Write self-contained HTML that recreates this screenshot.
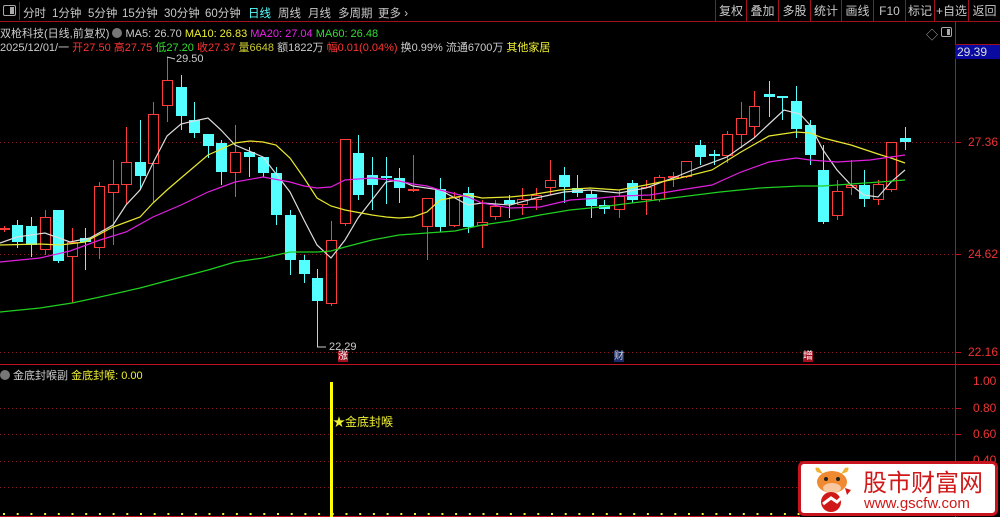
<!DOCTYPE html>
<html><head><meta charset="utf-8"><style>
*{margin:0;padding:0;box-sizing:border-box}
body{width:1000px;height:517px;background:#000;overflow:hidden;position:relative;font-family:"Liberation Sans","Noto Sans CJK SC",sans-serif;font-size:12px;color:#ccc}
.bar{position:absolute;left:0;top:0;width:1000px;height:22px;border-bottom:1px solid #a01020;background:#000}
.bar span{position:absolute;top:5px;font-size:11.5px;color:#c8c8c8}
.rb{position:absolute;top:0;height:22px;border-left:1px solid #a01020;color:#c8c8c8;font-size:12px;text-align:center;line-height:22px}
.t{position:absolute;white-space:nowrap;font-size:11px}
</style></head><body>
<div class="bar">
<div style="position:absolute;left:3px;top:5px;width:13px;height:11px;border:1px solid #aaa;border-radius:2px"><div style="position:absolute;right:1px;top:1px;width:4px;height:7px;background:#aaa"></div></div>
<div style="position:absolute;left:19px;top:2px;width:1px;height:18px;background:#a01020"></div>
<span style="left:23px">分时</span><span style="left:52px">1分钟</span><span style="left:88px">5分钟</span><span style="left:122px">15分钟</span><span style="left:164px">30分钟</span><span style="left:205px">60分钟</span><span style="left:248px;color:#5ff">日线</span><span style="left:278px">周线</span><span style="left:308px">月线</span><span style="left:338px">多周期</span><span style="left:378px">更多 ›</span>
<div class="rb" style="left:715px;width:31px">复权</div><div class="rb" style="left:746px;width:32px">叠加</div><div class="rb" style="left:778px;width:32px">多股</div><div class="rb" style="left:810px;width:31px">统计</div><div class="rb" style="left:841px;width:32px">画线</div><div class="rb" style="left:873px;width:32px">F10</div><div class="rb" style="left:905px;width:29px">标记</div><div class="rb" style="left:934px;width:34px">+自选</div><div class="rb" style="left:968px;width:32px">返回</div>
</div>
<div class="t" style="left:0;top:25px;color:#ccc">双枪科技(日线,前复权) <span style="display:inline-block;width:10px;height:10px;border-radius:5px;background:#777;vertical-align:-1px"></span> MA5: 26.70 <span style="color:#ee3">MA10: 26.83</span> <span style="color:#e2e">MA20: 27.04</span> <span style="color:#3d3">MA60: 26.48</span></div>
<div class="t" style="left:0;top:39px;color:#ccc">2025/12/01/一 <span style="color:#f33">开27.50 高27.75</span> <span style="color:#3d3">低27.20</span> <span style="color:#f33">收27.37</span> <span style="color:#cc3">量6648</span> 额1822万 <span style="color:#f33">幅0.01(0.04%)</span> 换0.99% 流通6700万 <span style="color:#ee3">其他家居</span></div>
<div class="t" style="left:926px;top:26px;color:#aaa;font-size:12px">◇</div>
<div style="position:absolute;left:941px;top:27px;width:11px;height:10px;border:1px solid #aaa;border-radius:2px"><div style="position:absolute;right:1px;top:1px;width:3px;height:6px;background:#aaa"></div></div>
<svg id="s" width="1000" height="517" style="position:absolute;left:0;top:0"></svg>
<div class="t" style="left:955px;top:44px;width:45px;height:15px;background:#0a0aa0;border-top:1px solid #a01020;color:#ddd;padding-left:2px;font-size:12px">29.39</div>
<div class="t" style="left:968px;top:135px;color:#e33;font-size:12px">27.36</div>
<div class="t" style="left:968px;top:247px;color:#e33;font-size:12px">24.62</div>
<div class="t" style="left:968px;top:345px;color:#e33;font-size:12px">22.16</div>
<div class="t" style="left:973px;top:374px;color:#e33;font-size:12px">1.00</div>
<div class="t" style="left:973px;top:401px;color:#e33;font-size:12px">0.80</div>
<div class="t" style="left:973px;top:427px;color:#e33;font-size:12px">0.60</div>
<div class="t" style="left:973px;top:453px;color:#e33;font-size:12px">0.40</div>
<div class="t" style="left:176px;top:53px;color:#ccc">29.50</div>
<div class="t" style="left:329px;top:341px;color:#ccc">22.29</div>
<div class="t" style="left:338px;top:351px;background:#a01020;color:#fff;font-size:10px;line-height:11px">涨</div>
<div class="t" style="left:614px;top:351px;color:#ccc;font-size:10px;line-height:11px;background:#1a2a6a">财</div>
<div class="t" style="left:803px;top:351px;color:#fff;font-size:10px;line-height:11px;background:#a01020">增</div>
<div class="t" style="left:0;top:367px;color:#ccc"><span style="display:inline-block;width:10px;height:10px;border-radius:5px;background:#777;vertical-align:-1px"></span> 金底封喉副 <span style="color:#ee3">金底封喉: 0.00</span></div>
<div class="t" style="left:333px;top:413px;color:#ee3;font-size:12px">★金底封喉</div>
<div style="position:absolute;left:798px;top:461px;width:200px;height:55px;background:#fff;border:3px solid #c8141e;border-radius:6px">
<svg width="52" height="50" style="position:absolute;left:6px;top:0" viewBox="0 0 52 50">
<path d="M10 8 Q6 2 12 4 L16 10Z M40 8 Q44 2 38 4 L34 10Z" fill="#f0b030"/>
<ellipse cx="25" cy="18" rx="15" ry="11" fill="#f08a30"/>
<ellipse cx="25" cy="24" rx="9" ry="5" fill="#f8c8a0"/>
<circle cx="19" cy="15" r="2" fill="#222"/><circle cx="31" cy="15" r="2" fill="#222"/>
<circle cx="24" cy="38" r="10" fill="#d01818"/><path d="M16 40 L24 34 L30 38 L40 28" stroke="#fff" stroke-width="3" fill="none"/><path d="M38 24 L44 26 L40 31Z" fill="#d01818"/>
</svg>
<div class="t" style="left:62px;top:3px;color:#d01818;font-size:24px;font-family:'Noto Sans CJK SC',sans-serif;line-height:28px">股市财富网</div>
<div class="t" style="left:63px;top:31px;color:#d01818;font-size:15px">www.gscfw.com</div>
</div>
<script>
var s='';
function L(x1,y1,x2,y2,c,w,d){s+='<line x1="'+x1+'" y1="'+y1+'" x2="'+x2+'" y2="'+y2+'" stroke="'+c+'" stroke-width="'+(w||1)+'"'+(d?' stroke-dasharray="'+d+'"':'')+'/>';}
[142,254,352].forEach(function(y){L(0,y+.5,955,y+.5,'#8a1520',1,'1 3');L(955,y+.5,961,y+.5,'#c01020');});
[408,434,461,487].forEach(function(y){L(0,y+.5,955,y+.5,'#8a1520',1,'1 3');L(955,y+.5,961,y+.5,'#c01020');});
L(955.5,22,955.5,517,'#c01020');L(0,364.5,1000,364.5,'#c01020');
L(0,516.5,800,516.5,'#c01020');
var c=[[4,228,229,226,232,'r'],[17,225,242,220,248,'c'],[31,226,245,217,257,'c'],[45,217,249,210,255,'r'],[58,210,261,210,263,'c'],[72,242,256,228,303,'r'],[85,238,242,228,270,'c'],[99,186,247,182,259,'r'],[113,184,192,160,245,'r'],[126,162,184,127,205,'r'],[140,162,176,120,190,'c'],[153,114,163,102,202,'r'],[167,80,105,57,122,'r'],[181,87,116,75,130,'c'],[194,120,133,102,138,'c'],[208,134,146,134,158,'c'],[221,143,172,140,185,'c'],[235,152,172,125,197,'r'],[249,152,157,147,177,'c'],[263,157,173,157,177,'c'],[276,173,215,167,225,'c'],[290,215,260,210,275,'c'],[304,260,274,255,283,'c'],[317,278,301,269,347,'c'],[331,240,303,221,306,'r'],[345,139,223,139,226,'r'],[358,153,195,135,200,'c'],[372,175,185,157,210,'c'],[386,176,178,157,204,'c'],[399,178,188,168,203,'c'],[413,189,190,155,192,'r'],[427,198,226,198,260,'r'],[440,189,227,178,232,'c'],[454,197,225,192,227,'r'],[468,193,227,187,233,'c'],[482,222,225,200,248,'r'],[495,206,216,200,220,'r'],[509,200,204,195,218,'c'],[522,199,204,188,215,'r'],[536,195,199,188,210,'r'],[550,180,187,160,195,'r'],[564,175,187,167,203,'c'],[577,188,193,175,197,'c'],[591,194,206,190,218,'c'],[604,205,209,200,214,'c'],[619,196,209,190,218,'r'],[632,183,200,180,203,'c'],[646,187,199,180,215,'r'],[659,177,199,175,202,'r'],[673,176,177,172,187,'r'],[686,161,176,161,178,'r'],[700,145,157,140,165,'c'],[714,154,156,150,165,'c'],[727,134,155,131,163,'r'],[741,118,134,102,148,'r'],[754,106,126,91,138,'r'],[769,94,97,81,117,'c'],[782,96,98,96,120,'c'],[796,101,129,86,138,'c'],[810,125,155,120,165,'c'],[823,170,222,145,224,'c'],[837,191,215,180,220,'r'],[851,185,187,160,195,'r'],[864,185,199,170,207,'c'],[878,184,199,180,205,'r'],[891,142,189,142,192,'r'],[905,138,142,127,150,'c']];
c.forEach(function(k){var x=k[0],col=k[5]=='r'?'#ff3c3c':'#54ffff';L(x+.5,k[3],x+.5,k[4],col);
 var h=Math.max(k[2]-k[1],1);
 if(k[5]=='r')s+='<rect x="'+(x-4.5)+'" y="'+(k[1]+.5)+'" width="10" height="'+h+'" fill="#000" stroke="'+col+'"/>';
 else s+='<rect x="'+(x-5)+'" y="'+k[1]+'" width="11" height="'+Math.max(h,2)+'" fill="'+col+'"/>';});
function P(pts,col){s+='<polyline fill="none" stroke="'+col+'" stroke-width="1.2" points="'+pts+'"/>';}
P('0,243 17,237 45,233 70,242 90,238 113,225 126,205 140,190 153,163 167,136 181,124 194,121 208,118 221,130 235,145 263,157 290,192 304,220 317,245 331,258 345,240 358,218 372,200 386,182 399,180 413,186 440,190 468,205 482,203 510,205 536,198 564,192 590,190 619,193 646,188 673,178 700,167 727,157 754,138 769,124 784,110 800,114 810,125 823,150 837,170 851,185 864,195 878,197 891,182 905,170','#ddd');
P('0,245 40,244 60,245 85,242 113,227 140,217 153,203 167,190 181,178 208,155 235,143 250,141 263,142 276,145 290,158 304,178 317,198 331,206 345,210 372,215 386,217 399,218 413,217 427,212 440,200 468,195 482,198 510,197 530,195 560,190 590,188 619,190 646,185 680,178 712,170 741,152 769,136 796,132 810,133 823,138 851,145 878,154 891,158 905,163','#e8e830');
P('0,262 40,258 70,251 100,240 126,232 153,217 181,205 208,192 235,182 263,177 290,182 304,186 317,188 331,187 345,180 372,178 399,181 413,184 427,186 440,190 468,197 482,203 510,208 540,207 570,200 600,198 620,196 650,195 680,190 712,185 741,172 769,162 796,158 810,160 837,162 870,160 891,157 905,155','#e020e0');
P('0,312 40,308 72,303 100,297 140,288 170,280 208,270 235,262 263,258 290,252 317,252 331,251 345,247 372,240 399,235 427,233 455,231 482,225 510,221 540,215 570,210 600,207 640,202 680,197 720,192 760,188 800,186 823,186 851,184 880,182 905,180','#20d020');
L(167,57,175,59,'#ccc');L(317,347,326,347,'#ccc');
s+='<rect x="330" y="382" width="3" height="135" fill="#ffff00"/>';
for(var x=3;x<800;x+=13.7)s+='<rect x="'+x+'" y="513" width="2" height="2" fill="#ee3"/>';
document.getElementById('s').innerHTML=s;
</script>
</body></html>
